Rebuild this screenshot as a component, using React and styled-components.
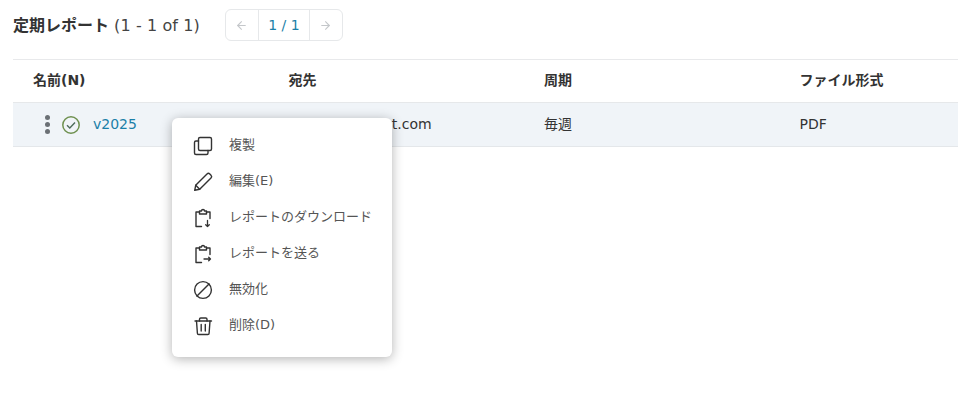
import React from "react";
import styled, { createGlobalStyle } from "styled-components";
import { ArrowLeft, ArrowRight } from "lucide-react";

const GlobalStyle = createGlobalStyle`
  html, body { margin: 0; padding: 0; background: #fff; }
  body {
    font-family: "DejaVu Sans", "Noto Sans CJK JP", sans-serif;
    color: #333;
    font-size: 14px;
  }
`;

const clipboardTop = (
  <>
    <path d="M8.500 6H5v14.500h5.500" />
    <path d="M15.500 6H19v6.500" />
    <path d="M8.500 8V5h2a1.500 1.500 0 0 1 3 0h2v3z" />
  </>
);

const menuItems = [
  {
    label: "複製",
    icon: (
      <>
        <rect x="7.500" y="3.500" width="13" height="13" rx="1.500" />
        <path d="M7.500 7H5A1.500 1.500 0 0 0 3.500 8.500V19A1.500 1.500 0 0 0 5 20.500h10.500A1.500 1.500 0 0 0 17 19v-2.500" />
      </>
    ),
  },
  {
    label: "編集(E)",
    icon: (
      <>
        <path d="M3.700 20.300l1-5L16 4a2 2 0 0 1 2.800 0l1.200 1.200a2 2 0 0 1 0 2.800L8.700 19.300z" />
        <path d="M4.700 15.300l4 4" />
      </>
    ),
  },
  {
    label: "レポートのダウンロード",
    icon: (
      <>
        {clipboardTop}
        <path d="M16.500 14.500v6M14.700 18.700l1.800 1.800 1.800-1.800" strokeWidth="1.300" />
      </>
    ),
  },
  {
    label: "レポートを送る",
    icon: (
      <>
        {clipboardTop}
        <path d="M13 17h6.500M17.700 15.200l1.800 1.800-1.800 1.800" strokeWidth="1.300" />
      </>
    ),
  },
  {
    label: "無効化",
    icon: (
      <>
        <circle cx="12" cy="12" r="8.400" />
        <path d="M6 18L18 6" />
      </>
    ),
  },
  {
    label: "削除(D)",
    icon: (
      <>
        <path d="M4 7h16.500" />
        <path d="M8.500 7V5.300A1.300 1.300 0 0 1 9.800 4h4.900A1.300 1.300 0 0 1 16 5.300V7" />
        <path d="M5.500 7l.9 12.200a1.300 1.300 0 0 0 1.300 1.300h9.100a1.300 1.300 0 0 0 1.300-1.300L19 7" />
        <path d="M10.200 10.500v6.500M14.300 10.500v6.500" />
      </>
    ),
  },
];

export default function App() {
  return (
    <Page>
      <GlobalStyle />
      <TopBar>
        <Title>
          <strong>定期レポート</strong> <Count>(1 - 1 of 1)</Count>
        </Title>
        <Pager>
          <PagerArrow><ArrowLeft size={13} strokeWidth={2} /></PagerArrow>
          <PagerNum>1 / 1</PagerNum>
          <PagerArrow><ArrowRight size={13} strokeWidth={2} /></PagerArrow>
        </Pager>
      </TopBar>
      <Table>
        <HeaderRow>
          <HeadCell>名前(N)</HeadCell>
          <HeadCell>宛先</HeadCell>
          <HeadCell>周期</HeadCell>
          <HeadCell>ファイル形式</HeadCell>
        </HeaderRow>
        <BodyRow>
          <NameCell>
            <Dots><i /><i /><i /></Dots>
            <svg width="18" height="18" viewBox="0 0 18 18" fill="none">
              <circle cx="9" cy="9" r="8.200" stroke="#6f9150" strokeWidth="1.500" />
              <path d="M5 9.300l2.800 2.700L13 6.500" stroke="#4d6b5a" strokeWidth="1.400" />
            </svg>
            <NameLink>v2025</NameLink>
          </NameCell>
          <Cell>report@contest.com</Cell>
          <Cell $cjk>毎週</Cell>
          <Cell>PDF</Cell>
        </BodyRow>
        <Menu>
          {menuItems.map((item) => (
            <MenuItem key={item.label}>
              <MenuIcon viewBox="0 0 24 24">{item.icon}</MenuIcon>
              <MenuLabel>{item.label}</MenuLabel>
            </MenuItem>
          ))}
        </Menu>
      </Table>
    </Page>
  );
}

const Page = styled.div`
  width: 958px;
  height: 400px;
  padding-left: 13px;
  box-sizing: border-box;
  overflow: hidden;
`;

const TopBar = styled.div`
  display: flex;
  align-items: center;
  gap: 25px;
  height: 59px;
  padding-bottom: 9px;
  box-sizing: border-box;
`;

const Title = styled.div`
  font-size: 16px;
  color: #333;
  padding-bottom: 2px;
  strong { font-weight: 700; }
`;

const Count = styled.span`
  color: #444;
  letter-spacing: 0.1px;
`;

const Pager = styled.div`
  display: flex;
  height: 32px;
  border: 1px solid #e6e8ea;
  border-radius: 6px;
  box-sizing: border-box;
`;

const PagerArrow = styled.div`
  width: 32px;
  display: flex;
  align-items: center;
  justify-content: center;
  color: #c4c7ca;
`;

const PagerNum = styled.div`
  width: 50px;
  display: flex;
  align-items: center;
  justify-content: center;
  border-left: 1px solid #e6e8ea;
  border-right: 1px solid #e6e8ea;
  font-size: 14px;
  color: #1b7fa8;
`;

const Table = styled.div`
  position: relative;
  border-top: 1px solid #e8e9eb;
`;

const HeaderRow = styled.div`
  display: grid;
  grid-template-columns: repeat(4, 255.500px);
  height: 43px;
  align-items: center;
  border-bottom: 1px solid #e6e8ea;
  box-sizing: border-box;
`;

const HeadCell = styled.div`
  padding: 0 0 4px 20px;
  font-size: 14px;
  font-weight: 700;
  color: #333;
`;

const BodyRow = styled.div`
  display: grid;
  grid-template-columns: repeat(4, 255.500px);
  height: 44px;
  align-items: center;
  background: #f0f4f8;
  border-bottom: 1px solid #e4e7ea;
  box-sizing: border-box;
`;

const Cell = styled.div`
  padding: 0 0 ${(p) => (p.$cjk ? "4px" : "2px")} 20px;
  font-size: 14px;
  color: #333;
  white-space: nowrap;
`;

const NameCell = styled.div`
  display: flex;
  align-items: center;
  padding-left: 32px;
  gap: 12px;
`;

const Dots = styled.div`
  display: flex;
  flex-direction: column;
  gap: 2px;
  i {
    width: 5px;
    height: 5px;
    border-radius: 50%;
    background: #6b7075;
  }
`;

const NameLink = styled.span`
  margin-left: 1px;
  padding-bottom: 2px;
  font-size: 14px;
  color: #1b7fa8;
`;

const Menu = styled.div`
  position: absolute;
  left: 159px;
  top: 58px;
  width: 220px;
  height: 239px;
  padding: 8px 0;
  box-sizing: border-box;
  background: #fff;
  border-radius: 6px;
  box-shadow: 0 2px 12px rgba(0, 0, 0, 0.3);
`;

const MenuItem = styled.div`
  display: flex;
  align-items: center;
  height: 36px;
  padding-left: 19px;
  gap: 14px;
  font-size: 13px;
  color: #555;
`;

const MenuLabel = styled.span`
  padding-bottom: 2px;
`;

const MenuIcon = styled.svg`
  width: 24px;
  height: 24px;
  margin-top: 3px;
  fill: none;
  stroke: #333;
  stroke-width: 1.400;
  stroke-linecap: round;
  stroke-linejoin: round;
  flex: none;
`;
